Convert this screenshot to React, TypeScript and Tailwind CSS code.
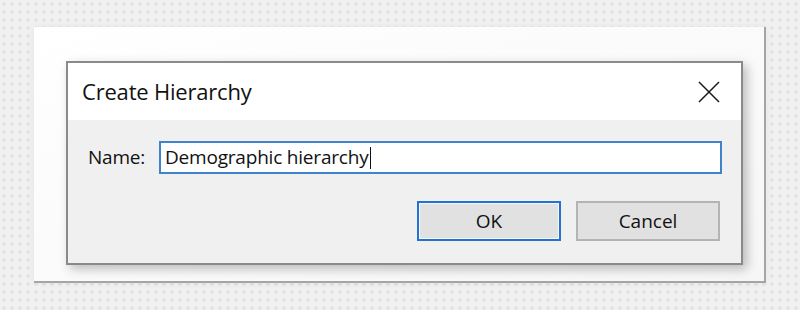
import React from "react";

const CloseIcon = () => (
    <svg width="22" height="22" viewBox="0 0 22 22" className="text-[#1a1a1a]">
        <path d="M1 1 L21 21 M21 1 L1 21" stroke="currentColor" strokeWidth="1.5" fill="none" />
    </svg>
);

export default function App() {
    return (
        <div
            className="w-[800px] h-[310px] overflow-hidden bg-[#f1f1f1] bg-[radial-gradient(circle,#e3e3e3_1.5px,transparent_2px)] bg-[length:8px_8px] pt-[27px] pl-[34px]"
            style={{ fontFamily: '"Open Sans", "Noto Sans", sans-serif' }}
        >
            <div className="w-[732px] h-[256px] bg-[linear-gradient(to_bottom_right,#ffffff,#f6f6f6)] border-r-2 border-b-2 border-[#a5a5a5] shadow-[0_0_8px_rgba(0,0,0,0.06)] pt-[34px] pl-[32px]">
                <div className="w-[677px] h-[204px] border-2 border-[#8a8a8a] bg-[#f0f0f0] shadow-[4px_4px_10px_rgba(0,0,0,0.25)] flex flex-col">
                    <div className="h-[57px] bg-white flex items-center justify-between pl-[14px] pr-[21px] shrink-0">
                        <span className="text-[22px] text-[#111] tracking-[-0.2px]">Create Hierarchy</span>
                        <CloseIcon />
                    </div>
                    <div className="flex flex-col pt-[21px] pl-[20px] pr-[19px]">
                        <div className="flex items-center gap-[12px]">
                            <span className="text-[19px] text-[#111] w-[59px] tracking-[-0.2px]">Name:</span>
                            <div className="flex-1 h-[33px] border-2 border-[#3f84cb] bg-white flex items-center pl-[4px]">
                                <span className="text-[19px] text-[#111] tracking-[-0.2px]">Demographic hierarchy</span>
                                <span className="w-[1.5px] h-[22px] bg-[#111] ml-[1px]" />
                            </div>
                        </div>
                        <div className="flex justify-end gap-[15px] mt-[27px] pr-[2px]">
                            <button className="w-[144px] h-[40px] border-2 border-[#1f74d3] bg-[#e1e1e1] shadow-[inset_0_0_0_1px_#f6f6f6] text-[19px] text-[#111]">
                                OK
                            </button>
                            <button className="w-[144px] h-[40px] border-2 border-[#b4b4b4] bg-[#e1e1e1] text-[19px] text-[#111]">
                                Cancel
                            </button>
                        </div>
                    </div>
                </div>
            </div>
        </div>
    );
}
